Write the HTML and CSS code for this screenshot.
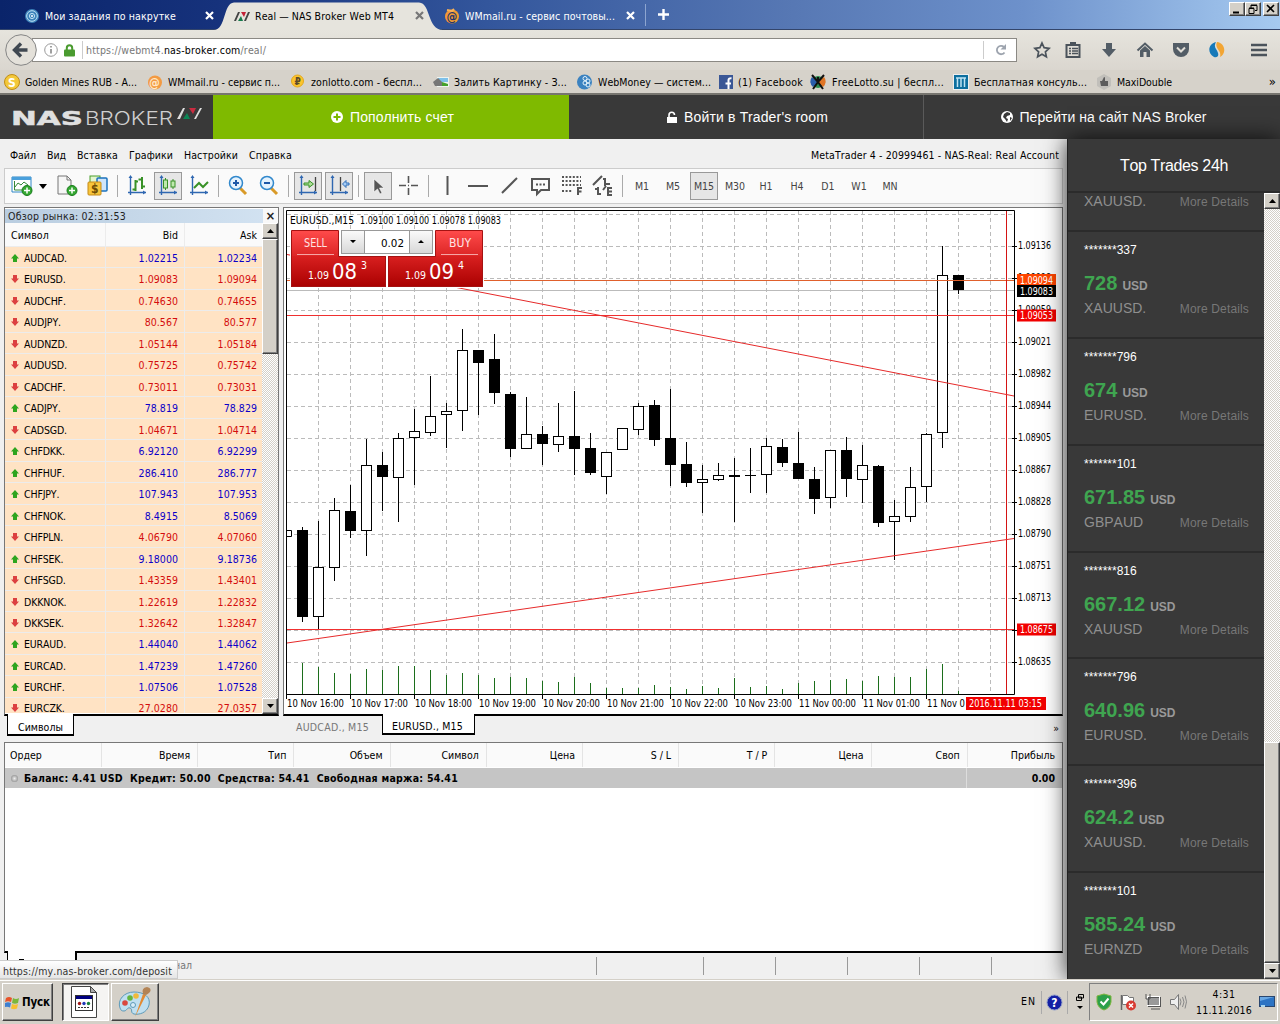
FILE: index.html
```html
<!DOCTYPE html>
<html lang="ru">
<head>
<meta charset="utf-8">
<title>Real — NAS Broker Web MT4</title>
<link rel="stylesheet" href="styles.css">
</head>
<body>
<div class="titlebar">
  <div class="tab tab-first"><svg width="16" height="16"><circle cx="8" cy="8" r="7" fill="#3d83bb"/><g fill="none" stroke="#bfe2f5"><circle cx="8" cy="8" r="5.3"/><circle cx="8" cy="8" r="2.6"/></g><circle cx="8" cy="8" r="1" fill="#fff"/></svg><span><em data-w="131">Мои задания по накрутке</em></span><svg class="x" width="9" height="9"><path d="M1 1l7 7M8 1l-7 7" stroke="#fff" stroke-width="2.2"/></svg></div>
  <div class="tab-active"><svg class="tab-shape" width="229" height="30"><path d="M0 30C12 30 9 3 20 2.5H205C217 3 213 30 229 30Z" fill="#e6e4dd"/></svg><div class="tab-label"><svg width="16" height="10"><path d="M0 10L4 1h2L2 10zM10 10L14 1h2L12 10z" fill="#444"/><path d="M4 10l3-5 2 5z" fill="#167a4c"/><path d="M7 1h5l-2 5z" fill="#c32036"/></svg><span><em data-w="139">Real — NAS Broker Web MT4</em></span><svg class="x" width="9" height="9"><path d="M1 1l7 7M8 1l-7 7" stroke="#777" stroke-width="2.2"/></svg></div></div>
  <div class="tab tab-third"><svg width="16" height="16"><circle cx="8" cy="8.5" r="7" fill="#f29a35"/><path d="M3 2l5 1 2-2" stroke="#f7b25a" stroke-width="2" fill="none"/><text x="2.5" y="12.5" font-size="12" font-weight="bold" fill="#26356a">@</text></svg><span><em data-w="150">WMmail.ru - сервис почтовы...</em></span><svg class="x" width="9" height="9"><path d="M1 1l7 7M8 1l-7 7" stroke="#fff" stroke-width="2.2"/></svg></div>
  <div class="newtab"><svg width="11" height="11"><path d="M5.5 0v11M0 5.5h11" stroke="#fff" stroke-width="2.4"/></svg></div>
  <div class="winbtns"><i><svg width="14" height="12"><path d="M3 9.5h6" stroke="#000" stroke-width="2"/></svg></i><i><svg width="14" height="12"><path d="M5 2.5h6v5H9M5 2v3M3 5.500h5v5H3z" fill="none" stroke="#000"/><path d="M5 2h6M3 5h5" stroke="#000"/></svg></i><i class="close"><svg width="14" height="12"><path d="M3 2l7 7M10 2l-7 7" stroke="#000" stroke-width="1.6"/></svg></i></div>
</div>
<div class="navbar">
  <div class="back"><svg width="32" height="32"><circle cx="16" cy="16" r="15.300" fill="#e4e1da" stroke="#858585"/><path d="M16 9.500L9.500 16l6.500 6.500M10 16h12.500" fill="none" stroke="#404851" stroke-width="3.400"/></svg></div>
  <div class="urlbar">
    <svg width="14" height="14"><circle cx="7" cy="7" r="6.300" fill="none" stroke="#999"/><path d="M7 6v4.500M7 3v1.600" stroke="#888" stroke-width="1.600"/></svg>
    <svg class="lock" width="11" height="13"><path d="M2.800 7V4a2.700 2.700 0 0 1 5.400 0v3" fill="none" stroke="#4a9b2f" stroke-width="2"/><rect x="0" y="5.500" width="11" height="7" rx="1" fill="#4a9b2f"/></svg>
    <i class="usep"></i><em class="url" data-w="180">https://webmt4.<b>nas-broker.com</b>/real/</em>
    <i class="reload"><svg width="14" height="14"><path d="M10.500 9.500a4.200 4.200 0 1 1-.5-5.500" fill="none" stroke="#9da4ae" stroke-width="1.800"/><path d="M12 1v5.500H6.500z" fill="#9da4ae"/></svg></i>
  </div>
  <div class="navicons">
    <svg width="18" height="18"><path d="M9 2l2.100 4.700 5 .6-3.700 3.500 1 5L9 13.300 4.600 15.800l1-5L1.900 7.300l5-.6z" fill="none" stroke="#4b535b" stroke-width="1.700"/></svg>
    <svg width="18" height="18"><path d="M2.500 4h13v12h-13z" fill="none" stroke="#4b535b" stroke-width="2"/><path d="M6 1h6v3H6z" fill="#4b535b"/><path d="M5 7.500h2M8 7.500h6M5 10h2M8 10h6M5 12.500h2M8 12.500h6" stroke="#4b535b" stroke-width="1.400"/></svg>
    <svg width="18" height="18"><path d="M6 2h6v6h4l-7 8-7-8h4z" fill="#535d66"/></svg>
    <svg width="18" height="18"><path d="M1.500 9.500L9 2.500l7.500 7" fill="none" stroke="#535d66" stroke-width="2"/><path d="M4 9.500L9 5l5 4.500V16h-3.500v-5h-3v5H4z" fill="#535d66"/></svg>
    <svg width="18" height="18"><path d="M1 2h16v6a8 8 0 0 1-16 0z" fill="#535d66"/><path d="M5 6.500l4 4 4-4" fill="none" stroke="#e1ded7" stroke-width="2"/></svg>
    <svg width="18" height="18"><path d="M8 1C0 3-1 12 6 16c3 1 5-1 4-4C9 8 5 7 8 1z" fill="#1679b9"/><path d="M9 1c8 1 10 11 3 15 2-7-6-8-3-15z" fill="#f2a534"/></svg>
    <svg class="burger" width="18" height="18"><path d="M1 4h16M1 9h16M1 14h16" stroke="#4b535b" stroke-width="2.400"/></svg>
  </div>
</div>
<div class="bookmarks">
  <span style="width:143px"><svg width="16" height="16"><circle cx="8" cy="8" r="7.500" fill="#f3c83a" stroke="#c08d16"/><text x="4" y="12.500" font-size="12" font-weight="bold" fill="#fff">S</text></svg><em data-w="112">Golden Mines RUB - А...</em></span>
  <span style="width:143px"><svg width="16" height="16"><circle cx="8" cy="8.500" r="7" fill="#f39a42"/><text x="2" y="12.500" font-size="12" font-weight="bold" fill="#ffe9c9">@</text></svg><em data-w="112">WMmail.ru - сервис п...</em></span>
  <span style="width:143px"><svg width="16" height="16"><circle cx="7.500" cy="7" r="6" fill="#fbc52c" stroke="#e4a81c"/><text x="4.500" y="11" font-size="10" font-weight="bold" fill="#5c4a2a">₽</text></svg><em data-w="111">zonlotto.com - беспл...</em></span>
  <span style="width:143px"><svg width="16" height="12"><rect x="4" y="1" width="12" height="10" fill="#eef4f0"/><path d="M5 2h10v4H5z" fill="#7ec1ea"/><path d="M5 6l4 0 6 2v2H5z" fill="#45a12c"/><path d="M0 6l5-4 4 4v4H2z" fill="#777"/></svg><em data-w="113">Залить Картинку - З...</em></span>
  <span style="width:143px"><svg width="17" height="16"><circle cx="8.500" cy="8" r="7.500" fill="#3b82c0"/><g fill="none" stroke="#e3f2fb"><circle cx="9" cy="4.500" r="2"/><circle cx="12" cy="7" r="2"/><circle cx="9" cy="9" r="2"/><circle cx="12" cy="11" r="2"/></g></svg><em data-w="113">WebMoney — систем...</em></span>
  <span style="width:91px"><svg width="14" height="14"><rect width="14" height="14" fill="#3a5796"/><path d="M9.500 14V8.500h2.500M9.500 8.500H6.500M9.500 9V5q0-2 3-1.800" stroke="#fff" stroke-width="2" fill="none"/></svg><em data-w="65">(1) Facebook</em></span>
  <span style="width:143px"><svg width="17" height="16"><circle cx="8" cy="8" r="6" fill="#2c8e50"/><path d="M2 3a7 7 0 0 0 1 10L8 8z" fill="#2a5cab"/><path d="M14 3a7 7 0 0 1-1 10L8 8z" fill="#e07525"/><path d="M2 1l6 7 6-7M8 8l-5 7M8 8l5 7M8 3v6" stroke="#111" stroke-width="2" fill="none"/></svg><em data-w="112">FreeLotto.su | беспл...</em></span>
  <span style="width:143px"><svg width="16" height="16"><rect width="16" height="16" fill="#eee"/><rect x="1" y="1" width="14" height="14" fill="#0d6f9f"/><path d="M3 4h10M4.500 4v9M8 4v9M11.500 4v9" stroke="#bfe4f4" stroke-width="1.500"/></svg><em data-w="113">Бесплатная консуль...</em></span>
  <span class="maxi"><svg width="16" height="16"><path d="M8 0l7 4v8l-7 4-7-4V4z" fill="#c1bfba"/><path d="M4 7h2l2-4 1 .5V7h3v5H5z" fill="#5c5c5c"/></svg><em data-w="55">MaxiDouble</em></span>
  <span class="more">»</span>
</div>
<header class="site">
  <div class="logo"><svg width="200" height="24"><text class="logo-b" x="0" y="18" textLength="72" lengthAdjust="spacingAndGlyphs">NAS</text><text class="logo-l" x="74" y="18" textLength="88" lengthAdjust="spacingAndGlyphs">BROKER</text><path d="M166 12l6-11h2l-5 11zM183 12l6-11h2l-6 11z" fill="#ddd"/><path d="M172 12l4-6 3 6z" fill="#0d8555"/><path d="M178 1h7l-3 6z" fill="#c92b40"/></svg></div>
  <a class="green"><svg width="12" height="12"><circle cx="6" cy="6" r="6" fill="#fff"/><path d="M6 2.500v7M2.500 6h7" stroke="#7fba00" stroke-width="2"/></svg><em data-w="104">Пополнить счет</em></a>
  <a class="room"><svg width="10" height="13"><rect x="0" y="6" width="10" height="6" fill="#fff"/><path d="M2 7V4a2.500 2.500 0 0 1 5.500 0" stroke="#fff" stroke-width="1.600" fill="none"/></svg><em data-w="144">Войти в Trader's room</em></a>
  <a class="goto"><svg width="12" height="12"><circle cx="6" cy="6" r="6" fill="#fff"/><path d="M6 1l3 1 0 2-3 1-1 2 2 1-1 3-2-3-2-2 1-3zM9 6l2 1-2 3z" fill="#393939"/></svg><em data-w="187">Перейти на сайт NAS Broker</em></a>
</header>
<div class="workspace">
  <main class="terminal">
    <nav class="menu"><em data-w="26">Файл</em><em data-w="19">Вид</em><em data-w="41">Вставка</em><em data-w="44">Графики</em><em data-w="54">Настройки</em><em data-w="43">Справка</em><em class="acct" data-w="248">MetaTrader 4 - 20999461 - NAS-Real: Real Account</em></nav>
    <div class="tools" id="tools"></div>
    <div class="panels">
      <section class="watch-col">
        <div class="watch">
          <div class="watch-title"><em data-w="118">Обзор рынка: 02:31:53</em><b>×</b></div>
          <div class="watch-body"><div class="quotes" id="quotes"><div class="qrow qhead"><span><em data-w="37">Символ</em></span><span>Bid</span><span>Ask</span></div></div>
          <div class="scroll"><i class="sb"><svg width="7" height="4"><path d="M0 4h7L3.500 0z"/></svg></i><i class="thumb"></i><i class="track"></i><i class="sb"><svg width="7" height="4"><path d="M0 0h7L3.500 4z"/></svg></i></div></div>
        </div>
        <div class="wtab"><em data-w="45">Символы</em></div>
      </section>
      <section class="chart-col">
        <div class="chart"><svg id="chart" width="778" height="507" viewBox="284 208 778 507"></svg></div>
        <div class="ctabs"><span class="off"><em data-w="73">AUDCAD., M15</em></span><span class="on"><em data-w="71">EURUSD., M15</em></span><span class="more2">»</span></div>
      </section>
    </div>
    <section class="orders">
      <div class="ohead"><span>Ордер</span><span>Время</span><span>Тип</span><span>Объем</span><span>Символ</span><span>Цена</span><span>S / L</span><span>T / P</span><span>Цена</span><span>Своп</span><span>Прибыль</span></div>
      <div class="obal"><i></i><em data-w="434">Баланс: 4.41 USD&nbsp; Кредит: 50.00&nbsp; Средства: 54.41&nbsp; Свободная маржа: 54.41</em><span>0.00</span></div>
    </section>
    <div class="btabs"><div class="bt-on"></div><div class="bt-j">нал</div><div class="cells"><i></i><i></i><i></i><i></i><i></i><i></i></div></div>
    <div class="status"><em data-w="169">https://my.nas-broker.com/deposit</em></div>
  </main>
  <aside class="trades">
    <h2><em data-w="108">Top Trades 24h</em></h2>
    <div class="tbody"><div class="cards" id="cards"></div>
    <div class="scroll"><i class="sb"><svg width="7" height="4"><path d="M0 4h7L3.500 0z"/></svg></i><i class="track"></i><i class="thumb"></i><i class="sb"><svg width="7" height="4"><path d="M0 0h7L3.500 4z"/></svg></i></div></div>
  </aside>
</div>
<footer class="taskbar">
  <div class="start"><svg width="15" height="15"><path d="M1 3q3-2 6 0L6 7Q3 5.500 0 7z" fill="#e8542a"/><path d="M8 3q3 2 6 0l-1 5q-3 1.500-6 0z" fill="#7ab73a"/><path d="M0 8q3-1.500 6 0l-1 4.500Q2 11 -1 12.500z" fill="#3e7fd0"/><path d="M7 9q3 1.500 6 0l-1 4.500q-3 1.500-6 0z" fill="#f6c02f"/></svg><em data-w="28">Пуск</em></div>
  <div class="task pressed"><svg width="26" height="32"><path d="M.5.5h19l6 6v25H.5z" fill="#fff" stroke="#444"/><path d="M19.500.5v6h6z" fill="#aaa" stroke="#444"/><rect x="4.500" y="9.500" width="17" height="15" fill="#fff" stroke="#333"/><rect x="5" y="10" width="16" height="3" fill="#000080"/><circle cx="8.500" cy="17.500" r="1.700" fill="#a01818"/><circle cx="13" cy="17.500" r="1.700" fill="#2238b8"/><circle cx="17.500" cy="17.500" r="1.700" fill="#16803a"/><path d="M7 21.500h12" stroke="#333" stroke-dasharray="2 1"/></svg></div>
  <div class="task"><svg width="34" height="32"><path d="M2 22C-1 14 6 6 16 6s17 5 15 13-10 10-15 9c-4-1-1-5-4-6s-3 3-6 3-3-1-4-3z" fill="#bfdff0" stroke="#5e9ab8"/><circle cx="7" cy="17" r="2.800" fill="#d9473e"/><circle cx="12" cy="12" r="2.800" fill="#65b53f"/><circle cx="18" cy="10" r="2.800" fill="#f0b93b"/><circle cx="15" cy="19" r="2.500" fill="#d8ecf7" stroke="#5e9ab8"/><path d="M17 31l8-23 3 1z" fill="#e38a32"/><path d="M25 8q-2-6 4-7 5 1 3 5-2 2-4 3z" fill="#b38354"/></svg></div>
  <div class="lang"><em data-w="15">EN</em></div><div class="help"><svg width="17" height="17"><circle cx="8.500" cy="8.500" r="7.500" fill="#1420a4" stroke="#8f9cc8"/><text x="5.200" y="13" font-size="12" font-weight="bold" fill="#fff">?</text></svg></div>
  <div class="rest"><svg width="10" height="18"><path d="M3.500 1.500h5v3.500h-5zM1.500 4h5v3.500h-5z" fill="#d4d0c8" stroke="#000"/><path d="M2 13h6l-3 3z"/></svg></div>
  <div class="tray">
    <svg width="16" height="18"><path d="M8 1l7 2v6q-1 6-7 8-6-2-7-8V3z" fill="#2ca04a" stroke="#7fb53f"/><path d="M4.500 8.500l3 3 5-6" stroke="#fff" stroke-width="2" fill="none"/></svg>
    <svg width="18" height="18"><path d="M2.500 2v15" stroke="#666" stroke-width="1.500"/><path d="M3.500 2.500h5l2 2h4v7h-11z" fill="#fff" stroke="#777"/><circle cx="12" cy="12.500" r="5" fill="#d83a31"/><path d="M10 10.500l4 4M14 10.500l-4 4" stroke="#fff" stroke-width="1.500"/></svg>
    <svg width="18" height="18"><rect x="4.500" y="4.500" width="12" height="9" fill="#999" stroke="#555"/><rect x="3.500" y="3.500" width="12" height="9" fill="none" stroke="#fff"/><path d="M2 1v5h4V1M4 6v6M7 16h9" stroke="#555" fill="none"/></svg>
    <svg width="18" height="18"><path d="M1.500 6.500h4l4-5v15l-4-5h-4z" fill="#eee" stroke="#777"/><path d="M11 5.500q2 3 0 7M13.500 4q3 5 0 10M16 2.500q3 6 0 13" stroke="#888" fill="none"/></svg>
    <div class="clock"><em data-w="23">4:31</em><em data-w="56">11.11.2016</em></div>
    <svg class="desk" width="16" height="14"><rect x=".5" y="1.500" width="15" height="10" fill="#2d74c4" stroke="#2a4770"/><path d="M1 6l14-4H1z" fill="#6aa8e4"/><path d="M2 10h4v2H2z" fill="#a9d6ef"/></svg>
  </div>
</footer>
<script src="app.js"></script>
</body>
</html>
```
FILE: styles.css
```css
*{box-sizing:border-box}
body{margin:0;width:1280px;height:1024px;overflow:hidden;background:#d4d0c8;color:#000;font:10.5px/14px "DejaVu Sans Condensed","DejaVu Sans",sans-serif;font-kerning:none}
em,i{font-style:normal}
em{display:inline-block;white-space:nowrap}
svg{display:block;flex:none}
.titlebar{height:30px;display:flex;align-items:center;background:linear-gradient(90deg,#0a246a,#16327c 17%,#33569c 38%,#5778b4 62%,#6d91cb 80%,#a6caf0);color:#fff;border-bottom:1px solid #33456b}
.tab{display:flex;align-items:center;height:30px;padding-top:2px}
.tab-first{width:219px;padding-left:24px}
.tab-first .x,.tab-third .x{margin-left:auto}
.tab-first span{margin-left:5px}
.tab-first{padding-right:5px}
.tab-active{position:relative;width:222px;height:30px;color:#000}
.tab-shape{position:absolute;left:-5px;top:0}
.tab-label{position:relative;display:flex;align-items:center;height:32px;padding-left:15px}
.tab-label span{margin-left:5px}
.tab-label .x{margin-left:auto;margin-right:17px}
.tab-third{width:204px;padding:2px 10px 0 3px}
.tab-third span{margin-left:5px}
.newtab{border-left:1px solid #8da5d0;padding-left:12px;height:22px;display:flex;align-items:center}
.winbtns{display:flex;margin:-12px 1px 0 auto}
.winbtns i,.sb,.thumb{background:#d4d0c8;border:1px solid;border-color:#fff #404040 #404040 #fff;box-shadow:inset -1px -1px #808080}
.winbtns i{width:16px;height:14px}
.winbtns .close{margin-left:2px}
.navbar{height:40px;background:linear-gradient(#e6e4dd,#dad6cf);display:flex;align-items:center;padding-left:5px}
.back{position:relative;z-index:1;width:32px;height:32px}
.urlbar{height:24px;width:985px;margin-left:-5px;background:#fff;border:1px solid #8b8984;display:flex;align-items:center;padding-left:11px}
.lock{margin-left:6px}
.usep{width:1px;height:18px;background:#ccc;margin:0 3px 0 7px}
.url{color:#777}
.url b{font-weight:normal;color:#000}
.reload{margin-left:auto;width:33px;height:18px;border-left:1px solid #ccc;padding:2px 0 0 10px}
.navicons{display:flex;align-items:center;margin-left:16px;gap:18px}
.navicons svg:nth-child(1){margin-right:-5px}
.navicons .burger{margin-left:6px}
.bookmarks{height:25px;display:flex;align-items:center;background:#d6d2ca;border-bottom:2px solid #77756f;padding-left:4px}
.bookmarks span{display:flex;align-items:center;gap:5px;padding-top:1px}
.bookmarks .more{margin:0 4px 0 auto;font-size:13px}
.site{height:44px;background:#393939;display:flex;color:#fff;font:14px/20px "Liberation Sans",Arial,sans-serif}
.logo{width:213px;padding:12px 0 0 11px}
.logo-b{font:bold 19px "DejaVu Sans",sans-serif;fill:#e0e0e0;stroke:#e0e0e0;stroke-width:.5px}
.logo-l{font:18px "Inter",sans-serif;font-weight:300;fill:#cfcfcf}
.site a{display:flex;align-items:center;justify-content:center;gap:7px;padding-left:3px}
.green{width:356px;background:#7fba00}
.room{width:355px;border-right:1px solid #5a5a5a}
.goto{width:356px}
.workspace{display:flex;height:840px}
.terminal{width:1067px;background:#f0f0f0;padding:0 4px;display:flex;flex-direction:column;position:relative}
.menu{height:29px;display:flex;align-items:center;gap:11px;padding:3px 4px 0 6px}
.acct{margin-left:auto}
.tools{height:36px;width:1059px;border:1px solid #ccc;background:#fafafa;display:flex;align-items:center;gap:3px;padding-left:3px}
.tools .b{width:28px;height:28px;display:flex;align-items:center;justify-content:center;border:1px solid transparent;color:#444}
.tools .p{border:1px solid #999;background:#e6e6e6}
.tools .dd{width:14px;margin-left:-3px;display:flex;justify-content:center;padding-right:1px}
.tools .s{width:5px;height:22px;background:linear-gradient(90deg,transparent 2px,#aaa 2px,#aaa 3px,transparent 3px)}
.panels{display:flex;gap:4px;margin-top:3px;height:534px}
.watch-col{width:275px}
.watch{height:509px;border:1px solid #777;border-bottom:2px solid #000;background:#fff;padding-top:1px}
.watch-title{height:14px;display:flex;align-items:center;padding-left:3px;color:#222;background:linear-gradient(90deg,#b9cde0,#d3e3f2)}
.watch-title b{margin-left:auto;width:15px;background:#f8f8f8;text-align:center;font-size:13px}
.watch-body{display:flex;height:491px}
.quotes{width:258px;overflow:hidden;background:#ffe3c4;height:490px}
.qrow{height:21.476px;display:grid;grid-template-columns:101px 79px 78px;border-bottom:1px solid #ececec;line-height:22px;text-align:right;letter-spacing:.05px}
.qrow:last-child{height:20px;border:0;line-height:21px}
.qrow span{padding-right:6px;border-right:1px solid #ececec}
.qrow span:last-child{border:0}
.qrow span:first-child{text-align:left;padding-left:6px;color:#000;display:flex;align-items:center;letter-spacing:-.15px}
.qrow svg{margin-right:5px}
.qhead{height:24px;background:#fafafa;line-height:24px}
.up{color:#0b00c8}.dn{color:#d40d0d}
.scroll{width:16px;display:flex;flex-direction:column;background:#e9e7e3}
.sb{height:16px;display:flex;align-items:center;justify-content:center;flex:none}
.thumb{height:115px;flex:none}
.track{flex:1;background:conic-gradient(#d4d0c8 25%,#fff 0 50%,#d4d0c8 0 75%,#fff 0) 0 0/2px 2px}
.wtab{width:67px;margin:-2px 0 0 3px;height:22px;background:#fff;border:1px solid #000;border-top:0;border-bottom-width:2px;text-align:center;padding-top:6px;position:relative}
.chart-col{width:780px}
.chart{height:509px;border:1px solid #777;border-bottom:2px solid #000;background:#fff;overflow:hidden}
.ctabs{display:flex;color:#777}
.off{padding:4px 12px 0 13px;width:99px}
.on{margin-top:-2px;background:#fff;color:#000;border:1px solid #000;border-top:0;border-bottom-width:2px;width:93px;height:21px;padding:5px 0 0 9px}
.more2{margin:5px 4px 0 auto;color:#000}
.orders{margin-top:1px;width:1059px;height:211px;background:#fff;border:1px solid #777;border-bottom:2px solid #000}
.ohead{height:24px;display:grid;grid-template-columns:97px repeat(9,96.200px) 1fr;background:#fafafa;line-height:24px;text-align:right}
.ohead span{padding-right:7px;border-right:1px solid #e4e4e4}
.ohead span:first-child{text-align:left;padding-left:5px}
.ohead span:last-child{border:0}
.obal{height:20px;background:#c5c5c5;display:flex;align-items:center;font-weight:bold;margin-top:1px}
.obal i{width:7px;height:7px;border-radius:4px;background:radial-gradient(#eee,#777);margin:0 6px 0 6px}
.obal span{margin-left:auto;width:96px;line-height:20px;border-left:1px solid #ddd;text-align:right;padding-right:7px}
.btabs{height:26px;display:flex;color:#777}
.bt-on{width:70px;margin:-2px 0 0 3px;background:linear-gradient(#000,#000) 11px 8px/5px 1px no-repeat #fff;border-right:2px solid #000;border-left:1px solid #000}
.bt-j{margin-left:66px;width:60px;padding-top:5px;padding-left:31px}
.cells{display:flex;margin-left:393px;padding-top:4px}
.cells i{width:72px;height:18px;border-left:1px solid #999}
.cells i:first-child{width:107px}
.status{position:absolute;left:0;bottom:0;width:178px;height:19px;background:linear-gradient(#fff,#e5e5e5);border:1px solid #ccc;border-left:0;padding:3px;color:#333;z-index:2}
.trades{width:213px;background:#393939;color:#fff;border-left:1px solid #222;font-family:"Liberation Sans",Arial,sans-serif;box-shadow:0 0 22px rgba(0,0,0,.8);position:relative}
.trades h2{font-size:16px;font-weight:normal;height:54px;line-height:53px;margin:0;text-align:center;border-bottom:2px solid #2b2b2b}
.tbody{display:flex;height:786px}
.trades .thumb{height:221px}
.cards{width:196px;height:786px;overflow:hidden}
.card{height:106.900px;border-bottom:2px solid #2b2b2b;padding:10px 15px 0 16px;font-size:12px;line-height:16px}
.card:first-child{margin-top:-68px}
.card:last-child{border:0}
.card div{display:flex;justify-content:space-between;align-items:baseline}
.card .amt{justify-content:flex-start;gap:5px;font-weight:bold;color:#3fa550;font-size:20px;height:26px;line-height:25px;margin:13px 0 3px}
.amt small{font-size:12px;color:#999}
.sym{color:#8f8f8f;font-size:14px}
.sym small{font-size:12px;color:#777;letter-spacing:.15px}
.taskbar{height:45px;background:#d4d0c8;border-top:1px solid #d4d0c8;box-shadow:inset 0 1px #fff;display:flex;align-items:center;padding-left:2px;position:relative}
.start,.task{border:1px solid;border-color:#fff #404040 #404040 #fff;box-shadow:inset -1px -1px #808080;height:38px;display:flex;align-items:center}
.start{width:51px;font-weight:bold;gap:2px;padding-left:2px;font-size:11.5px}
.task{width:48px;justify-content:center;margin-left:2px}
.pressed{width:47px;margin-left:9px;background:#f5f4f2;border-color:#404040 #fff #fff #404040;padding-right:4px;box-shadow:inset 1px 1px #808080}
.lang{margin-left:862px;margin-top:-3px}
.help{margin-left:5px;border:1px solid #aaa;border-width:0 1px;padding:3px 4px}
.rest{margin-left:7px}
.tray{margin-left:4px;width:189px;height:38px;border:1px solid #808080;border-color:#808080 #fff #fff #808080;display:flex;align-items:center;gap:7px;padding-left:6px;flex:none}
.clock{display:flex;flex-direction:column;align-items:center;gap:2px;margin-left:2px}
```
FILE: app.js
```js
const $ = id => document.getElementById(id);

// Toolbar
const axes = '<path d="M4.500 2v18M2 17.500h18" stroke="#2f67b1" fill="none" stroke-width="1.400"/><path d="M4.500 0l2 3h-4zM20 17.500l-3-2v4z" fill="#2f67b1"/>';
const plus = '<circle cx="16" cy="15.500" r="5" fill="#35a832" stroke="#187c1b"/><path d="M16 12.500v6M13 15.500h6" stroke="#fff" stroke-width="1.500"/>';
const lens = s => `<path d="M13 13l6 6" stroke="#d99a28" stroke-width="3"/><circle cx="9" cy="8" r="6.500" fill="#e5f2fd" stroke="#3188cc" stroke-width="1.500"/><path d="${s}" stroke="#1e58a8" stroke-width="2"/>`;
const icons = [
  '<path d="M1 2h19v15H1z" fill="#fff" stroke="#2f86c5"/><path d="M1 2h19v3H1z" fill="#4aa0dc"/><path d="M3.500 6v9h11M4 12l3-4 3 2 3-3 4 3" fill="none" stroke="#35883a"/>' + plus, 'dd',
  '<path d="M2 1h9l4 4v14H2z" fill="#f6f6f6" stroke="#777"/><path d="M11 1v4h4" fill="none" stroke="#777"/>' + plus,
  '<rect x="3" y="1" width="10" height="12" fill="#e3f6cf" stroke="#4a9e2d"/><rect x="10" y="3" width="10" height="13" rx="1" fill="#cfe5fb" stroke="#1b72bd" stroke-width="1.500"/><rect x="1" y="7" width="13" height="13" rx="1" fill="#f7c53c" stroke="#c58a17"/><text x="4" y="18" font-size="12" font-weight="bold" fill="#6d4b04">$</text>', '|',
  axes + '<path d="M9.500 5v11M6.500 14.500h3M9.500 6.500h2.500M16 2v12M16 4.500h-3.500M16 11.500h3" stroke="#389127" stroke-width="2" fill="none"/>',
  '*' + axes + '<path d="M8.500 3v12M16 4v10" stroke="#389127"/><rect x="6.500" y="5" width="4" height="8" fill="#bfe9ae" stroke="#389127"/><rect x="14" y="6" width="4" height="6" fill="#bfe9ae" stroke="#389127"/>',
  axes + '<path d="M6 13l5-5 4 4 5-5" stroke="#389127" fill="none" stroke-width="2"/>', '|',
  lens('M6 8h6M9 5v6'), lens('M6 8h6'), '|',
  '*' + axes + '<path d="M18.500 2v14" stroke="#444" stroke-width="1.300"/><path d="M7 8h5V5.500l4.500 3.500-4.500 3.500V10H7z" fill="#aade94" stroke="#389127"/>',
  '*' + axes + '<path d="M12.500 2v14" stroke="#444" stroke-width="1.300"/><path d="M21 8h-3V5.500L14.500 9l3.500 3.500V10h3z" fill="#a7cdf5" stroke="#2d6cb7"/>', '|',
  '*<path d="M7 4v13l3.500-3 2.500 5 2-1-2.500-5H17z" fill="#555" stroke="#fff" stroke-width=".6"/>',
  '<path d="M10.500 1v7M10.500 13v7M1 10.500h7M13 10.500h7M10 10.500h1" stroke="#555" stroke-width="1.600"/>', '|',
  '<path d="M10.500 1v19" stroke="#555" stroke-width="2"/>', '<path d="M0 11h20" stroke="#555" stroke-width="2"/>',
  '<path d="M3 18L18 3" stroke="#555" stroke-width="2"/>',
  '<path d="M2 4h17v11h-8l-4 4v-4H2z" fill="none" stroke="#555" stroke-width="2"/><path d="M6 9.500h10" stroke="#555" stroke-width="2" stroke-dasharray="2 1.500"/>',
  '<path d="M1 2h19M1 6h19M1 10h19M1 16h10" stroke="#555" stroke-width="2" stroke-dasharray="2 1.600"/><path d="M17 20v-7h4M17 16.500h3.500" fill="none" stroke="#555" stroke-width="2"/>',
  '<path d="M1 10L10 1M3 14h3v5M6 12v7h3M13 3v8M13 4h-2M13 9h5M11 15l3-4M20 13h-4v7h4M16 16.500h4" fill="none" stroke="#555" stroke-width="2"/>', '|'
];
$('tools').innerHTML = icons.map(s => s === '|' ? '<i class="s"></i>' :
  s === 'dd' ? '<i class="dd"><svg width="8" height="5"><path d="M0 0h8L4 5z"/></svg></i>' :
  `<i class="b${s[0] === '*' ? ' p' : ''}"><svg width="22" height="22">${s.replace('*', '')}</svg></i>`).join('') +
  'M1 M5 M15 M30 H1 H4 D1 W1 MN'.split(' ').map(t => `<i class="b${t === 'M15' ? ' p' : ''}">${t}</i>`).join('');

// Market watch
const quotes = `AUDCAD 1.02215 1.02234 u
EURUSD 1.09083 1.09094 d
AUDCHF 0.74630 0.74655 d
AUDJPY 80.567 80.577 d
AUDNZD 1.05144 1.05184 d
AUDUSD 0.75725 0.75742 d
CADCHF 0.73011 0.73031 d
CADJPY 78.819 78.829 u
CADSGD 1.04671 1.04714 d
CHFDKK 6.92120 6.92299 u
CHFHUF 286.410 286.777 u
CHFJPY 107.943 107.953 u
CHFNOK 8.4915 8.5069 u
CHFPLN 4.06790 4.07060 d
CHFSEK 9.18000 9.18736 u
CHFSGD 1.43359 1.43401 d
DKKNOK 1.22619 1.22832 d
DKKSEK 1.32642 1.32847 d
EURAUD 1.44040 1.44062 u
EURCAD 1.47239 1.47260 u
EURCHF 1.07506 1.07528 u
EURCZK 27.0280 27.0357 d`;
$('quotes').innerHTML += quotes.split('\n').map(l => {
  const [s, b, a, d] = l.split(' ');
  const arrow = d === 'u' ? '<path d="M4 0l4 4.500H6V8H2V4.500H0z" fill="#2ea51f"/>' : '<path d="M4 8l4-4.500H6V0H2v3.500H0z" fill="#dc4040"/>';
  return `<div class="qrow ${d === 'u' ? 'up' : 'dn'}"><span><svg width="8" height="8">${arrow}</svg>${s}.</span><span>${b}</span><span>${a}</span></div>`;
}).join('');

// Top trades
$('cards').innerHTML = [['', '', 'XAUUSD.'], ['337', '728', 'XAUUSD.'], ['796', '674', 'EURUSD.'], ['101', '671.85', 'GBPAUD'], ['816', '667.12', 'XAUUSD'], ['796', '640.96', 'EURUSD.'], ['396', '624.2', 'XAUUSD.'], ['101', '585.24', 'EURNZD']]
  .map(([n, a, s]) => `<div class="card"><div>${n ? '*******' + n : '&nbsp;'}</div><div class="amt">${a || '&nbsp;'}${a ? '<small>USD</small>' : ''}</div><div class="sym">${s}<small>More Details</small></div></div>`).join('');

// Chart: candles as [hollow, high, bodyTop, bodyBottom, low], volume tops
const candles = [[0,527,530,617,622],[1,521,567,616,629],[1,498,510,567,581],[0,485,511,531,538],[1,439,465,530,556],[0,452,465,477,511],[1,433,438,477,522],[1,409,431,437,485],[1,376,416,432,436],[1,403,411,414,448],[1,329,350,410,431],[0,350,350,363,415],[0,334,359,393,404],[0,392,394,449,457],[1,397,434,448,448],[0,426,434,444,465],[1,403,436,444,452],[0,391,436,449,475],[0,433,448,473,475],[1,452,452,476,494],[1,428,428,449,449],[1,403,406,429,435],[0,400,405,440,446],[0,389,438,465,486],[0,442,464,483,487],[1,465,479,482,513],[1,463,475,479,481],[0,458,475,477,522],[0,448,475,476,493],[1,438,446,474,493],[0,439,447,463,467],[0,432,463,479,479],[0,467,479,499,514],[1,450,450,497,508],[0,437,450,479,497],[1,445,465,479,503],[0,465,466,523,527],[1,500,516,521,560],[1,467,487,516,522],[1,433,434,486,502],[1,246,275,432,448],[0,275,275,290,294]];
const vols = [663,667,673,674,669,670,666,666,670,675,673,675,678,677,678,681,682,677,683,688,688,688,685,687,689,686,688,678,687,686,689,683,681,680,679,681,676,677,677,669,664,691];
const line = (x1, y1, x2, y2, c, extra = '') => `<line x1="${x1}" y1="${y1}" x2="${x2}" y2="${y2}" stroke="${c}" ${extra}/>`;
const level = (y, c) => `<rect x="287" y="${y}" width="727" height="1" fill="${c}"/>`;
const txt = (x, y, s, w, size = 10, fill = '#000', anchor = 'start') => `<text x="${x}" y="${y}" font-size="${size}" fill="${fill}" textLength="${w}" lengthAdjust="spacingAndGlyphs" text-anchor="${anchor}">${s}</text>`;
let g = '<defs><linearGradient id="top" x2="0" y2="1"><stop stop-color="#ff4b4b"/><stop offset="1" stop-color="#dc2525"/></linearGradient><linearGradient id="bot" x2="0" y2="1"><stop stop-color="#d92020"/><stop offset="1" stop-color="#a90000"/></linearGradient><linearGradient id="btn" x2="0" y2="1"><stop stop-color="#fafafa"/><stop offset="1" stop-color="#d8d8d8"/></linearGradient></defs>';
for (let x = 318.5; x < 1014; x += 32) g += line(x, 211, x, 694, '#bbb', 'stroke-dasharray="4 3"');
for (let y = 214.5; y < 690; y += 32) g += line(287, y, 1014, y, '#bbb', 'stroke-dasharray="4 3"');
g += line(287, 290.5, 1014, 290.5, '#bbb');
vols.forEach((v, i) => g += line(302.5 + 16 * i, v, 302.5 + 16 * i, 694, '#1c6e1c'));
g += '<path d="M286 530.500h5.500v6H286" fill="#fff" stroke="#000"/>';
candles.forEach(([w, h, t, b, l], i) => {
  const x = 302.5 + 16 * i;
  g += line(x, h, x, l, '#000');
  g += w ? `<rect x="${x - 5}" y="${t + .5}" width="10" height="${b - t}" fill="#fff" stroke="#000"/>` : `<rect x="${x - 5.5}" y="${t}" width="11" height="${b - t}"/>`;
});
g += level(280, '#e0602c') + level(315, '#f03030') + level(629, '#f03030') + line(1006.5, 211, 1006.5, 694, '#d41414');
g += line(287, 254.5, 1014, 396, '#e62a2a') + line(287, 643, 1014, 538.5, '#e62a2a');
g += '<path d="M286.500 698V210.500H1014.500V694.500H286" fill="none" stroke="#000"/>';
['1.09136','1.09098','1.09059','1.09021','1.08982','1.08944','1.08905','1.08867','1.08828','1.08790','1.08751','1.08713','','1.08635'].forEach((s, i) => {
  const y = 246 + 32 * i;
  g += line(1012, y + .5, 1017, y + .5, '#000') + (s ? txt(1018, y + 2.5, s, 33) : '');
});
['10 Nov 16:00','10 Nov 17:00','10 Nov 18:00','10 Nov 19:00','10 Nov 20:00','10 Nov 21:00','10 Nov 22:00','10 Nov 23:00','11 Nov 00:00','11 Nov 01:00'].forEach((s, i) => {
  g += line(286.5 + 64 * i, 694, 286.5 + 64 * i, 699, '#000') + txt(287 + 64 * i, 707, s, 57);
});
g += line(926.5, 694, 926.5, 699, '#000') + txt(927, 707, '11 Nov 0', 38);
const tag = (y, s, c) => `<rect x="1017" y="${y - 6}" width="39" height="12" fill="${c}"/>` + txt(1020, y + 3.5, s, 33, 10, '#fff');
g += tag(280, '1.09094', '#ff4500') + tag(291, '1.09083', '#000') + tag(315.5, '1.09053', '#f20000') + tag(629.5, '1.08675', '#f20000');
g += '<rect x="966" y="697" width="80" height="13" fill="#f20000"/>' + txt(969, 707, '2016.11.11 03:15', 73, 10, '#fff');
g += txt(290, 224, 'EURUSD.,M15', 64) + txt(360, 224, '1.09100 1.09100 1.09078 1.09083', 141);
// One-click trading panel
g += '<rect x="290" y="229" width="194" height="59" fill="#fff"/><path d="M291.500 256V230.500h47V256z" fill="url(#top)"/><path d="M435.500 256V230.500h47V256z" fill="url(#top)"/>' +
  '<rect x="291" y="256" width="95" height="31" fill="url(#bot)"/><rect x="388" y="256" width="95" height="31" fill="url(#bot)"/>' +
  '<path d="M297 254.500h37M441 254.500h37" stroke="#f6a5a5"/><path d="M291.500 286.500V230.500h47v26h47v30zM388.500 286.500v-30h47v-26h47v56z" fill="none" stroke="#a51212"/>' +
  '<rect x="341.500" y="230.500" width="91" height="23" fill="#fff" stroke="#999"/><rect x="342" y="231" width="23" height="22" fill="url(#btn)"/><rect x="409" y="231" width="23" height="22" fill="url(#btn)"/><path d="M364.500 231v22M409.500 231v22" stroke="#999"/><path d="M350 240h6l-3 3zM418 243h6l-3-3z"/>' +
  txt(304, 247, 'SELL', 23, 12, '#ffe4e4') + txt(449, 247, 'BUY', 22, 12, '#ffe4e4') + txt(381, 247, '0.02', 23, 11) +
  txt(308, 279, '1.09', 21, 11, '#fff') + txt(332, 279, '08', 25, 21, '#fff') + txt(361, 269, '3', 6, 10, '#fff') +
  txt(405, 279, '1.09', 21, 11, '#fff') + txt(429, 279, '09', 25, 21, '#fff') + txt(458, 269, '4', 6, 10, '#fff');
$('chart').innerHTML = g;

// Spread each fixed-width label over its measured width
document.querySelectorAll('em[data-w]').forEach(e => {
  const w = +e.dataset.w, n = e.textContent.length;
  e.style.letterSpacing = (w - e.getBoundingClientRect().width) / n + 'px';
});
```
